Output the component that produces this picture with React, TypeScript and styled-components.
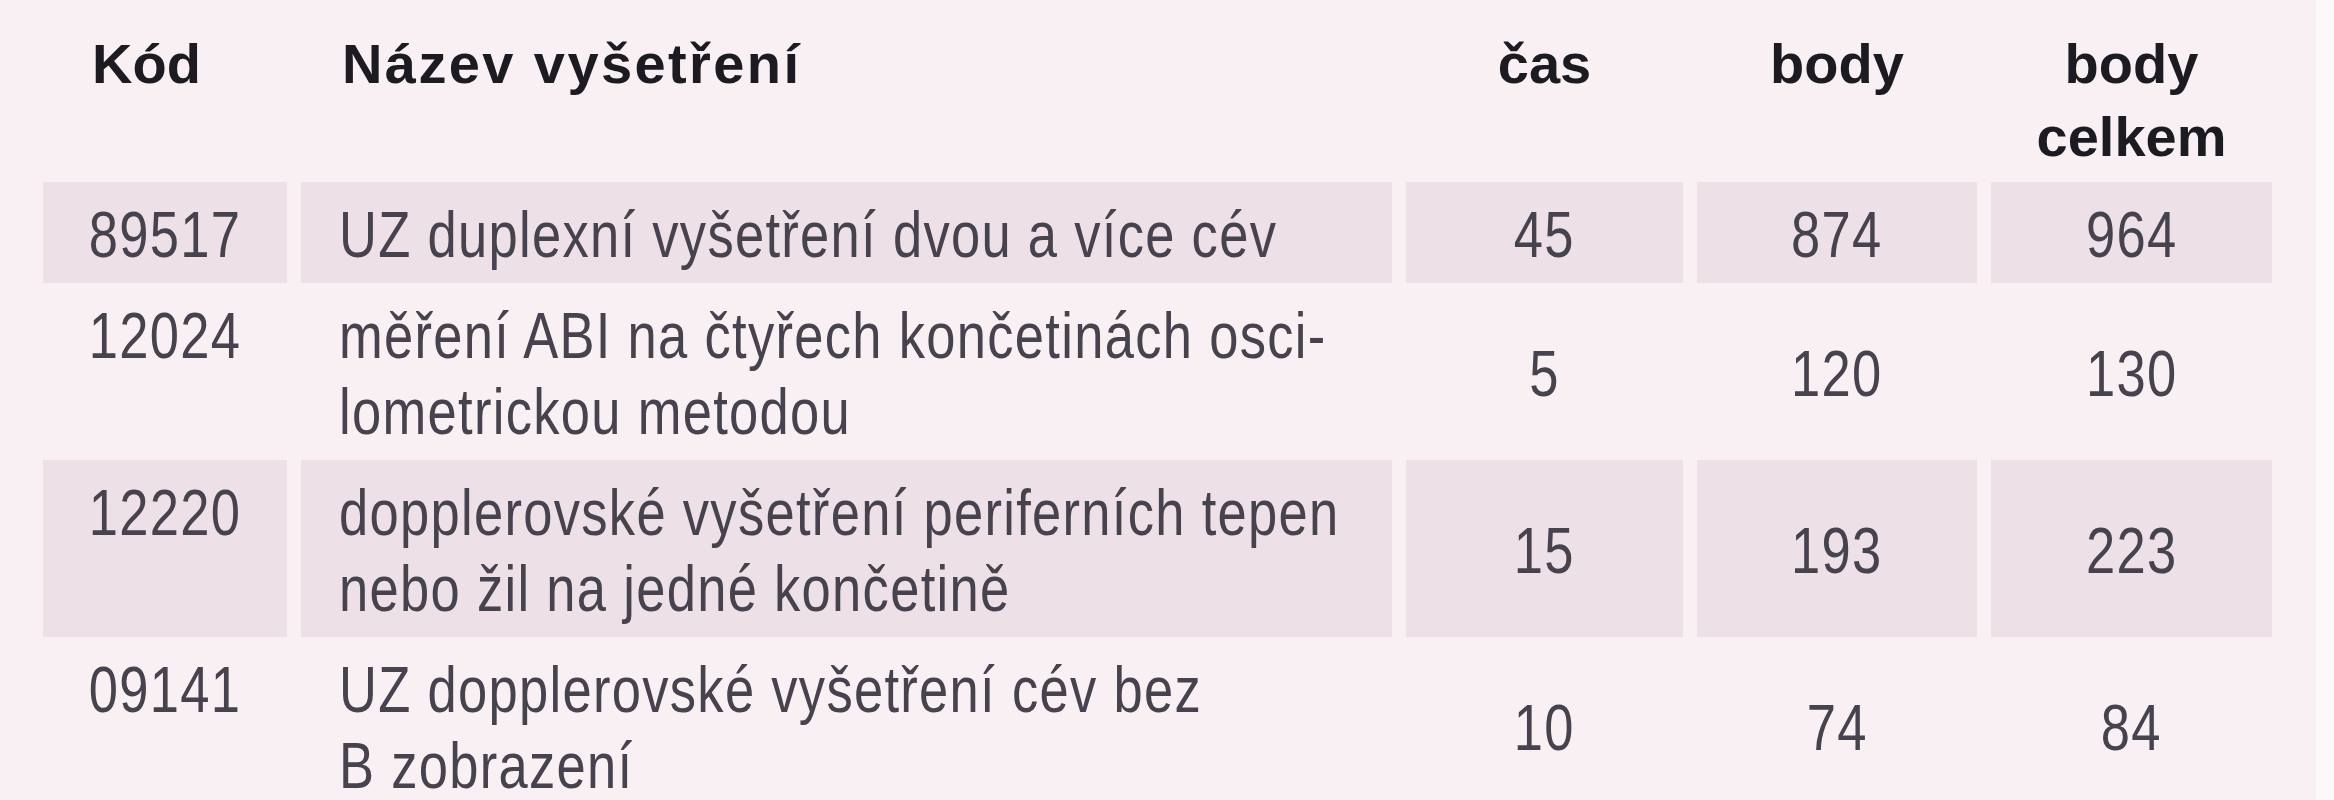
import React from 'react';
import styled, { createGlobalStyle } from 'styled-components';

const Global = createGlobalStyle`
  html, body { margin: 0; padding: 0; background: #fcf8fa; }
  body { overflow: hidden; }
`;

const cols = '244px 1091px 277px 280px 281px';

const Page = styled.div`
  width: 2316px;
  height: 800px;
  overflow: hidden;
  background: #f8f0f3;
  padding-left: 43px;
  box-sizing: border-box;
`;

const HeadRow = styled.div`
  display: grid;
  grid-template-columns: ${cols};
  column-gap: 14px;
  height: 182px;
  box-sizing: border-box;
  padding-top: 27px;
  font-family: 'Liberation Sans', Arial, sans-serif;
  font-weight: 700;
  font-size: 56px;
  line-height: 73px;
  color: #1d1b22;
`;

const HeadCell = styled.div<{ $align: 'left' | 'center'; $indent?: number; $spacing?: number }>`
  text-align: ${(p) => p.$align};
  padding-left: ${(p) => p.$indent ?? 0}px;
  letter-spacing: ${(p) => p.$spacing ?? 0}px;
  white-space: nowrap;
`;

const Row = styled.div`
  display: grid;
  grid-template-columns: ${cols};
  column-gap: 14px;
`;

type Kind = 'code' | 'name' | 'num';

const Cell = styled.div<{ $shade: boolean; $kind: Kind }>`
  background: ${(p) => (p.$shade ? '#ede0e7' : 'transparent')};
  box-sizing: border-box;
  padding: 15px 0 10px ${(p) => (p.$kind === 'name' ? '38px' : '0')};
  display: flex;
  flex-direction: column;
  justify-content: ${(p) => (p.$kind === 'num' ? 'center' : 'flex-start')};
  align-items: ${(p) => (p.$kind === 'name' ? 'flex-start' : 'center')};
  font-family: 'Liberation Sans', Arial, sans-serif;
  font-size: 64px;
  line-height: 76px;
  letter-spacing: 1.6px;
  color: #46434e;
  white-space: nowrap;
`;

/* condensed letterforms: the reference uses a narrow face */
const Line = styled.span<{ $origin: 'left' | 'center' }>`
  display: block;
  transform: scaleX(0.82);
  transform-origin: ${(p) => p.$origin} center;
`;

type Item = { code: string; name: string[]; cas: string; body: string; total: string };

const rows: Item[] = [
  { code: '89517', name: ['UZ duplexní vyšetření dvou a více cév'], cas: '45', body: '874', total: '964' },
  { code: '12024', name: ['měření ABI na čtyřech končetinách osci-', 'lometrickou metodou'], cas: '5', body: '120', total: '130' },
  { code: '12220', name: ['dopplerovské vyšetření periferních tepen', 'nebo žil na jedné končetině'], cas: '15', body: '193', total: '223' },
  { code: '09141', name: ['UZ dopplerovské vyšetření cév bez', 'B zobrazení'], cas: '10', body: '74', total: '84' },
];

export default function App() {
  return (
    <>
      <Global />
      <Page>
        <HeadRow>
          <HeadCell $align="left" $indent={49}>Kód</HeadCell>
          <HeadCell $align="left" $indent={41} $spacing={2.4}>Název vyšetření</HeadCell>
          <HeadCell $align="center">čas</HeadCell>
          <HeadCell $align="center">body</HeadCell>
          <HeadCell $align="center">
            body
            <br />
            celkem
          </HeadCell>
        </HeadRow>
        {rows.map((r, i) => {
          const shade = i % 2 === 0;
          return (
            <Row key={r.code}>
              <Cell $shade={shade} $kind="code">
                <Line $origin="center">{r.code}</Line>
              </Cell>
              <Cell $shade={shade} $kind="name">
                {r.name.map((l) => (
                  <Line key={l} $origin="left">
                    {l}
                  </Line>
                ))}
              </Cell>
              <Cell $shade={shade} $kind="num">
                <Line $origin="center">{r.cas}</Line>
              </Cell>
              <Cell $shade={shade} $kind="num">
                <Line $origin="center">{r.body}</Line>
              </Cell>
              <Cell $shade={shade} $kind="num">
                <Line $origin="center">{r.total}</Line>
              </Cell>
            </Row>
          );
        })}
      </Page>
    </>
  );
}
